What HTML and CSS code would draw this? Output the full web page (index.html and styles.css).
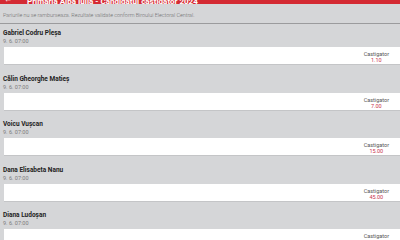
FILE: index.html
```html
<!DOCTYPE html>
<html lang="ro">
<head>
    <meta charset="UTF-8">
    <meta name="viewport" content="width=device-width, initial-scale=1.0">
    <title>Candidatul castigator</title>
    <link rel="stylesheet" href="styles.css">
</head>
<body>
    <header class="topbar">
        <span class="topbar__back">&larr;</span>
        <h1 class="topbar__title">Primaria Alba Iulia - Candidatul castigator 2024</h1>
    </header>
    <div class="notice">
        <p>Pariurile nu se ramburseaza. Rezultate validate conform Biroului Electoral Central.</p>
    </div>
    <main class="bets">
        <!-- candidati -->
        <div class="bet">
            <div class="bet__head">
                <p class="bet__name">Gabriel Codru Pleşa</p>
                <p class="bet__date">9. 6. 07:00</p>
            </div>
            <div class="bet__box">
                <div class="odd">
                    <span class="odd__label">Castigator</span>
                    <span class="odd__value">1.10</span>
                </div>
            </div>
        </div>
        <div class="bet">
            <div class="bet__head">
                <p class="bet__name">Călin Gheorghe Matieş</p>
                <p class="bet__date">9. 6. 07:00</p>
            </div>
            <div class="bet__box">
                <div class="odd">
                    <span class="odd__label">Castigator</span>
                    <span class="odd__value">7.00</span>
                </div>
            </div>
        </div>
        <div class="bet">
            <div class="bet__head">
                <p class="bet__name">Voicu Vuşcan</p>
                <p class="bet__date">9. 6. 07:00</p>
            </div>
            <div class="bet__box">
                <div class="odd">
                    <span class="odd__label">Castigator</span>
                    <span class="odd__value">15.00</span>
                </div>
            </div>
        </div>
        <div class="bet">
            <div class="bet__head">
                <p class="bet__name">Dana Elisabeta Nanu</p>
                <p class="bet__date">9. 6. 07:00</p>
            </div>
            <div class="bet__box">
                <div class="odd">
                    <span class="odd__label">Castigator</span>
                    <span class="odd__value">45.00</span>
                </div>
            </div>
        </div>
        <div class="bet">
            <div class="bet__head">
                <p class="bet__name">Diana Ludoşan</p>
                <p class="bet__date">9. 6. 07:00</p>
            </div>
            <div class="bet__box">
                <div class="odd">
                    <span class="odd__label">Castigator</span>
                    <span class="odd__value">101.00</span>
                </div>
            </div>
        </div>
    </main>
</body>
</html>
```

FILE: styles.css
```css
* {
    box-sizing: border-box;
}
body {
    margin: 0;
    padding: 0;
    background: #d5d6d8;
    font-family: Roboto, "Liberation Sans", sans-serif;
    overflow: hidden;
}
p {
    margin: 0;
}
.topbar {
    height: 4px;
    background: #d42a33;
    color: #fff;
    display: flex;
    align-items: flex-end;
    overflow: hidden;
    padding-left: 4px;
}
.topbar__back {
    width: 23px;
    font-size: 8px;
    line-height: 8px;
}
.topbar__title {
    margin: 0 0 -1.5px 0;
    font-size: 8px;
    line-height: 8px;
    font-weight: 700;
    white-space: nowrap;
}
.notice {
    height: 20px;
    border-bottom: 1px solid #9b9b9d;
    padding: 8px 0 0 3px;
}
.notice p {
    font-size: 5.4px;
    line-height: 6px;
    color: #707070;
    font-weight: 300;
}
.bet__head {
    padding: 9.5px 0 2px 3px;
}
.bet:first-child .bet__head {
    padding-top: 5px;
}
.bet__name {
    font-size: 6.5px;
    line-height: 8px;
    font-weight: 700;
    color: #222;
}
.bet__date {
    font-size: 5.5px;
    line-height: 8px;
    color: #7c7c7c;
}
.bet__box {
    margin-left: 4px;
    height: 18px;
    background: #fff;
    border-bottom: 1px solid #c4c5c7;
    display: flex;
    justify-content: flex-end;
    padding: 4px 11px 0 0;
}
.odd {
    display: flex;
    flex-direction: column;
    align-items: center;
}
.odd__label {
    font-size: 5.5px;
    line-height: 6px;
    color: #555;
}
.odd__value {
    font-size: 5.5px;
    line-height: 6px;
    color: #c8344c;
}
```
